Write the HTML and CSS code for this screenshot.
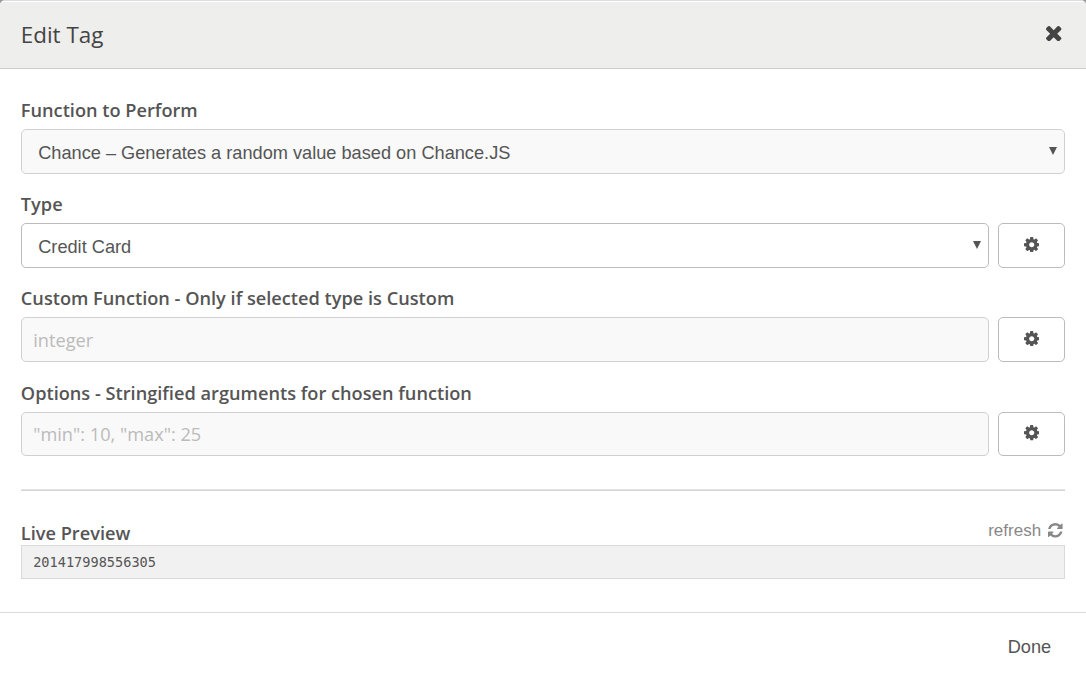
FILE: index.html
```html
<!DOCTYPE html>
<html lang="en">
<head>
<meta charset="utf-8">
<title>Edit Tag</title>
<link rel="stylesheet" href="styles.css">
</head>
<body>
<svg class="sprite" aria-hidden="true">
  <symbol id="cog" viewBox="0 128 1536 1536"><path d="M1024 896q0-106-75-181t-181-75-181 75-75 181 75 181 181 75 181-75 75-181zm512-109v222q0 12-8 23t-20 13l-185 28q-19 54-39 91 35 50 107 138 10 12 10 25t-9 23q-27 37-99 108t-94 71q-12 0-26-9l-138-108q-44 23-91 38-16 136-29 186-7 28-36 28h-222q-14 0-24.500-8.500t-11.500-21.500l-28-184q-49-16-90-37l-141 107q-10 9-25 9-14 0-25-11-126-114-165-168-7-10-7-23 0-12 8-23 15-21 51-66.500t54-70.500q-27-50-41-99l-183-27q-13-2-21-12.500t-8-23.500v-222q0-12 8-23t19-13l186-28q14-46 39-92-40-57-107-138-10-12-10-24 0-10 9-23 26-36 98.500-107.500t94.500-71.500q13 0 26 10l138 107q44-23 91-38 16-136 29-186 7-28 36-28h222q14 0 24.500 8.500t11.500 21.500l28 184q49 16 90 37l142-107q9-9 24-9 13 0 25 10 129 119 165 170 7 8 7 22 0 12-8 23-15 21-51 66.500t-54 70.500q26 50 41 98l183 28q13 2 21 12.500t8 23.500z"/></symbol>
</svg>
<div class="modal">
  <header class="modal-header">
    <h1 class="modal-title">Edit Tag</h1>
    <svg class="close" viewBox="110 366 1188 1188"><path d="M1298 1322q0 40-28 68l-136 136q-28 28-68 28t-68-28l-294-294-294 294q-28 28-68 28t-68-28l-136-136q-28-28-28-68t28-68l294-294-294-294q-28-28-28-68t28-68l136-136q28-28 68-28t68 28l294 294 294-294q28-28 68-28t68 28l136 136q28 28 28 68t-28 68l-294 294 294 294q28 28 28 68z"/></svg>
  </header>
  <main class="modal-body">
    <div class="field">
      <div class="label">Function to Perform</div>
      <div class="row">
        <div class="control select muted"><span>Chance – Generates a random value based on Chance.JS</span><svg class="arrow" viewBox="0 0 8 8"><path d="M0 0h8L4 8z"/></svg></div>
      </div>
    </div>
    <div class="field">
      <div class="label">Type</div>
      <div class="row">
        <div class="control select"><span>Credit Card</span><svg class="arrow" viewBox="0 0 8 8"><path d="M0 0h8L4 8z"/></svg></div>
        <div class="control gear"><svg class="cog"><use href="#cog"/></svg></div>
      </div>
    </div>
    <div class="field">
      <div class="label">Custom Function - Only if selected type is Custom</div>
      <div class="row">
        <div class="control input muted">integer</div>
        <div class="control gear"><svg class="cog"><use href="#cog"/></svg></div>
      </div>
    </div>
    <div class="field">
      <div class="label">Options - Stringified arguments for chosen function</div>
      <div class="row">
        <div class="control input muted">"min": 10, "max": 25</div>
        <div class="control gear"><svg class="cog"><use href="#cog"/></svg></div>
      </div>
    </div>
    <div class="rule"></div>
    <div class="preview-head">
      <div class="label">Live Preview</div>
      <div class="refresh"><span>refresh</span><svg class="refresh-icon" viewBox="0 128 1536 1536"><path d="M1511 1056q0 5-1 7-64 268-268 434.500t-478 166.500q-146 0-282.500-55t-243.500-157l-129 129q-19 19-45 19t-45-19-19-45v-448q0-26 19-45t45-19h448q26 0 45 19t19 45-19 45l-137 137q71 66 161 102t187 36q134 0 250-65t186-179q11-17 53-117 8-23 30-23h192q13 0 22.500 9.500t9.500 22.500zm25-800v448q0 26-19 45t-45 19h-448q-26 0-45-19t-19-45 19-45l138-138q-148-137-349-137-134 0-250 65t-186 179q-11 17-53 117-8 23-30 23h-199q-13 0-22.500-9.500t-9.500-22.500v-7q65-268 270-434.500t480-166.500q146 0 284 55.500t245 156.500l130-129q19-19 45-19t45 19 19 45z"/></svg></div>
    </div>
    <div class="preview">201417998556305</div>
  </main>
  <footer class="modal-footer"><span class="done">Done</span></footer>
</div>
</body>
</html>
```
FILE: styles.css
```css
* { box-sizing: border-box; }
body {
  margin: 0;
  background: #999;
  color: #555;
  font: 18.200px/24px "Open Sans", sans-serif;
}
svg { display: block; fill: currentColor; flex: none; }
.sprite { display: none; }
.modal {
  height: 682px;
  display: flex;
  flex-direction: column;
  background: #fff;
  border-top: 1px solid #dcdcdc;
  border-radius: 5px 5px 0 0;
  overflow: hidden;
}
.modal-header {
  height: 68px;
  display: flex;
  justify-content: space-between;
  align-items: center;
  padding: 0 24.500px 0 20.800px;
  background: #eeeeec;
  border-top: 1px solid #fff;
  border-bottom: 1px solid #ccc;
  color: #444;
}
.modal-title { margin: 0 0 1px; font-size: 22.400px; font-weight: 400; line-height: 30px; }
.close { width: 15.400px; height: 15.400px; margin-bottom: 3.500px; }
.modal-body { height: 543px; padding: 28.850px 21px 0; }
.field { height: 94.300px; }
.label { height: 30.850px; font-weight: 600; margin-left: -0.200px; }
.row { display: flex; gap: 9px; }
.control {
  height: 44.850px;
  flex: 1;
  display: flex;
  align-items: center;
  border: 1px solid #bbb;
  border-radius: 5px;
}
.muted { background: #f9f9f9; border-color: #d0d0d0; }
.select {
  justify-content: space-between;
  padding: 3px 7px 0 16.200px;
  font-family: "Liberation Sans", sans-serif;
}
.arrow { width: 8px; height: 8px; margin-bottom: 3.500px; }
.input { padding: 0.600px 11.200px 0; color: #bbb; }
.gear { flex: none; width: 67px; justify-content: center; }
.cog { width: 15.400px; height: 15.400px; margin-bottom: 2px; }
.rule { height: 2px; margin-top: 14px; background: linear-gradient(#e4e4e4 50%, #d4d4d4 50%); }
.preview-head { height: 54px; display: flex; justify-content: space-between; padding-top: 30px; }
.refresh {
  display: flex;
  align-items: center;
  gap: 7px;
  height: 20px;
  padding-right: 2.300px;
  color: #888;
  font: 17px/20px "Liberation Sans", sans-serif;
}
.refresh-icon { width: 14.600px; height: 14.600px; margin-bottom: 1px; }
.preview {
  height: 34px;
  padding: 0 11.200px;
  background: #f1f1f1;
  border: 1px solid #dadada;
  font: 13.600px/32px "DejaVu Sans Mono", monospace;
}
.modal-footer {
  flex: 1;
  display: flex;
  justify-content: flex-end;
  padding: 22px 34.800px 0 0;
  border-top: 1px solid #dadada;
  font-family: "Liberation Sans", sans-serif;
}
```
